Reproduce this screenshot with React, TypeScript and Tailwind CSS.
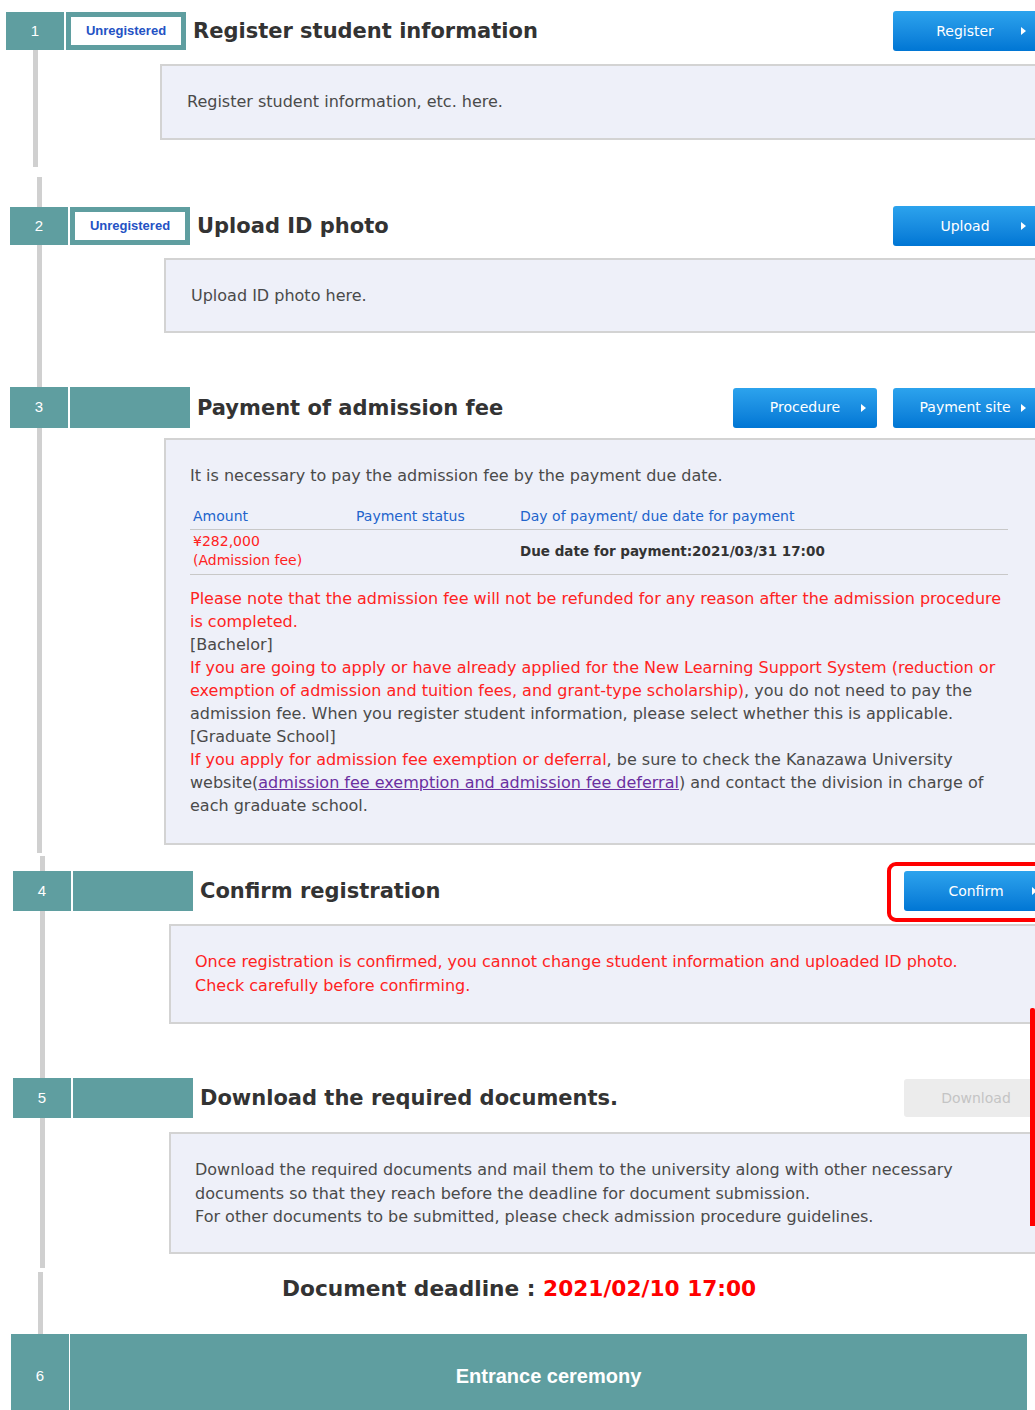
import React from 'react';

const TEAL = 'bg-[#5f9ea0]';

// small white caret used on the blue action buttons
const Caret = () => (
  <svg width="5" height="8" viewBox="0 0 5 8" className="absolute right-[11px] top-1/2 -translate-y-1/2">
    <path d="M0 0L5 4L0 8Z" fill="#ffffff" />
  </svg>
);

const ActionButton = ({ label, disabled }: { label: string; disabled?: boolean }) =>
  disabled ? (
    <div className="flex h-[38px] w-[144px] items-center justify-center rounded-[3px] bg-[#ececec] text-[14px] text-[#c4c4c4]">
      {label}
    </div>
  ) : (
    <div className="relative flex h-[40px] w-[144px] items-center justify-center rounded-[3px] bg-gradient-to-b from-[#2ca3ed] to-[#0076d4] text-[14px] text-white">
      {label}
      <Caret />
    </div>
  );

interface StepProps {
  num: number;
  pad: string;
  top: string;
  headH: string;
  badge?: boolean;
  title: string;
  actions?: React.ReactNode;
  children: React.ReactNode;
}

// one row of the timeline: number cell + status cell + title, then the grey rail beside the body
const Step = ({ num, pad, top, headH, badge, title, actions, children }: StepProps) => (
  <div className={`grid grid-cols-[58px_1fr] gap-x-[2px] ${pad}`}>
    <div className={`mx-auto w-[5px] ${top}`} />
    <div />
    <div className={`flex items-center justify-center ${TEAL} ${headH} font-['Liberation_Sans',sans-serif] text-[15px] text-white`}>
      {num}
    </div>
    <div className={`flex items-center ${headH}`}>
      <div className={`h-full w-[120px] shrink-0 ${TEAL} p-[5px]`}>
        {badge && (
          <div className="flex h-full items-center justify-center bg-white font-['Liberation_Sans',sans-serif] text-[13px] font-bold text-[#2452c4]">
            Unregistered
          </div>
        )}
      </div>
      <h2 className="ml-[7px] mt-[2px] text-[21px] font-bold text-[#333]">{title}</h2>
      <div className="flex-1" />
      <div className="flex gap-4">{actions}</div>
    </div>
    <div className="mx-auto w-[5px] bg-[#d0d0d0]" />
    <div>{children}</div>
  </div>
);

const Panel = ({ h, children, cls = '' }: { h: string; children: React.ReactNode; cls?: string }) => (
  <div className={`ml-[94px] border-2 border-[#d3d3d3] bg-[#eef0f9] text-[16px] text-[#4a4a4a] ${h} ${cls}`}>
    {children}
  </div>
);

export default function App() {
  return (
    <div className="relative h-[1410px] w-[1035px] overflow-hidden bg-white font-['DejaVu_Sans','Liberation_Sans',sans-serif]">
      <div className="w-[1060px]">
        <Step num={1} pad="pl-[6px] pr-[23px]" top="h-[12px]" headH="h-[38px]" badge title="Register student information" actions={<ActionButton label="Register" />}>
          <div className="pt-[14px] pb-[27px]">
            <Panel h="h-[76px]" cls="flex items-center pl-[25px]">
              Register student information, etc. here.
            </Panel>
          </div>
        </Step>

        <div className="h-[10px]" />

        <Step num={2} pad="pl-[10px] pr-[23px]" top="h-[30px] bg-[#d0d0d0]" headH="h-[38px]" badge title="Upload ID photo" actions={<ActionButton label="Upload" />}>
          <div className="pt-[13px] pb-[54px]">
            <Panel h="h-[75px]" cls="flex items-center pl-[25px]">
              Upload ID photo here.
            </Panel>
          </div>
        </Step>

        <Step
          num={3}
          pad="pl-[10px] pr-[23px]"
          top="h-0"
          headH="h-[41px]"
          title="Payment of admission fee"
          actions={
            <>
              <ActionButton label="Procedure" />
              <ActionButton label="Payment site" />
            </>
          }
        >
          <div className="pt-[10px] pb-[8px]">
            <Panel h="h-[407px]" cls="pl-[24px] pt-[24px]">
              <p className="leading-[23px]">It is necessary to pay the admission fee by the payment due date.</p>

              {/* fee table */}
              <div className="mt-[19px] w-[818px] text-[14px]">
                <div className="flex border-b border-[#c8c8c8] pb-[3px] pl-[3px] leading-[20px] text-[#2264cc]">
                  <div className="w-[163px]">Amount</div>
                  <div className="w-[164px]">Payment status</div>
                  <div>Day of payment/ due date for payment</div>
                </div>
                <div className="flex border-b border-[#c8c8c8] pt-[2px] pb-[4px] pl-[3px] leading-[19px]">
                  <div className="w-[163px] text-[#ff2222]">
                    ¥282,000
                    <br />
                    (Admission fee)
                  </div>
                  <div className="w-[164px]" />
                  <div className="self-center text-[13.5px] font-bold text-[#333]">Due date for payment:2021/03/31 17:00</div>
                </div>
              </div>

              <p className="mt-[12px] w-[825px] leading-[23px]">
                <span className="text-[#ff2222]">
                  Please note that the admission fee will not be refunded for any reason after the admission procedure is completed.
                </span>
                <br />
                [Bachelor]
                <br />
                <span className="text-[#ff2222]">
                  If you are going to apply or have already applied for the New Learning Support System (reduction or exemption of admission and tuition fees, and grant-type scholarship)
                </span>
                , you do not need to pay the admission fee. When you register student information, please select whether this is applicable.
                <br />
                [Graduate School]
                <br />
                <span className="text-[#ff2222]">If you apply for admission fee exemption or deferral</span>, be sure to check the Kanazawa University website(
                <span className="text-[#6b2fa0] underline">admission fee exemption and admission fee deferral</span>) and contact the division in charge of each graduate school.
              </p>
            </Panel>
          </div>
        </Step>

        <div className="h-[3px]" />

        <Step
          num={4}
          pad="pl-[13px] pr-[12px]"
          top="h-[15px] bg-[#d0d0d0]"
          headH="h-[40px]"
          title="Confirm registration"
          actions={
            <div className="relative">
              <ActionButton label="Confirm" />
              <div className="absolute -left-[17px] -top-[9px] h-[60px] w-[190px] rounded-[9px] border-4 border-[#ff0000]" />
            </div>
          }
        >
          <div className="pt-[13px] pb-[54px]">
            <Panel h="h-[100px]" cls="ml-[96px] pl-[24px] pt-[24px]">
              <p className="whitespace-nowrap leading-[24px] text-[#ff2222]">
                Once registration is confirmed, you cannot change student information and uploaded ID photo.
                <br />
                Check carefully before confirming.
              </p>
            </Panel>
          </div>
        </Step>

        <Step num={5} pad="pl-[13px] pr-[12px]" top="h-0" headH="h-[40px]" title="Download the required documents." actions={<ActionButton label="Download" disabled />}>
          <div className="pt-[14px] pb-[14px]">
            <Panel h="h-[122px]" cls="ml-[96px] pl-[24px] pt-[24px]">
              <p className="whitespace-nowrap leading-[23.5px]">
                Download the required documents and mail them to the university along with other necessary
                <br />
                documents so that they reach before the deadline for document submission.
                <br />
                For other documents to be submitted, please check admission procedure guidelines.
              </p>
            </Panel>
          </div>
        </Step>

        <div className="h-[4px]" />

        {/* deadline line */}
        <div className="grid h-[62px] grid-cols-[58px_1fr] pl-[11px]">
          <div className="mx-auto w-[5px] bg-[#d0d0d0]" />
          <div className="pl-[213px] pt-[4px] text-[21.7px] font-bold leading-[26px] text-[#333]">
            Document deadline : <span className="text-[#ff0000]">2021/02/10 17:00</span>
          </div>
        </div>

        {/* last step bar */}
        <div className="ml-[11px] flex h-[84px] w-[1016px] gap-px">
          <div className={`flex w-[58px] items-center justify-center ${TEAL} font-['Liberation_Sans',sans-serif] text-[15px] text-white`}>6</div>
          <div className={`flex flex-1 items-center justify-center ${TEAL} font-['Liberation_Sans',sans-serif] text-[20px] font-bold text-white`}>
            Entrance ceremony
          </div>
        </div>
      </div>

      {/* red marker at the right edge */}
      <div className="absolute left-[1030px] top-[1008px] h-[218px] w-[5px] rounded-t-[2px] bg-[#ff0000]" />
    </div>
  );
}
